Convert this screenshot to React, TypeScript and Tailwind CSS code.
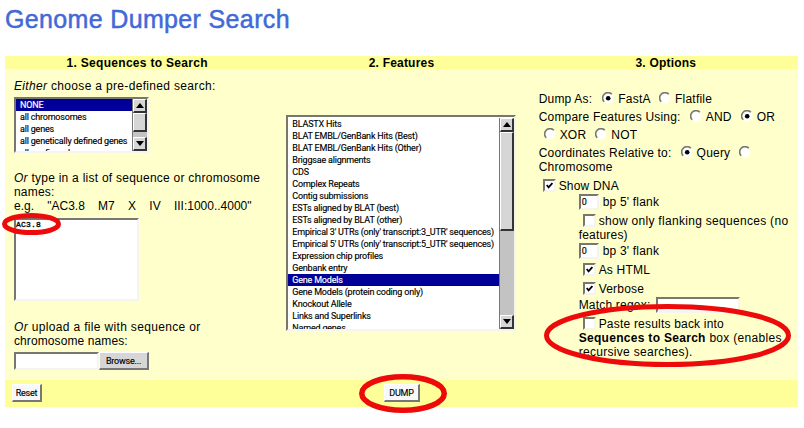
import type { ReactNode } from "react";

const searches = ["NONE", "all chromosomes", "all genes", "all genetically defined genes", "all confirmed genes"];

const features = [
  "BLASTX Hits",
  "BLAT EMBL/GenBank Hits (Best)",
  "BLAT EMBL/GenBank Hits (Other)",
  "Briggsae alignments",
  "CDS",
  "Complex Repeats",
  "Contig submissions",
  "ESTs aligned by BLAT (best)",
  "ESTs aligned by BLAT (other)",
  "Empirical 3' UTRs (only' transcript:3_UTR' sequences)",
  "Empirical 5' UTRs (only' transcript:5_UTR' sequences)",
  "Expression chip profiles",
  "Genbank entry",
  "Gene Models",
  "Gene Models (protein coding only)",
  "Knockout Allele",
  "Links and Superlinks",
  "Named genes",
];

const small = "font-['Roboto','Liberation_Sans',sans-serif] text-[9px] font-normal tracking-[-0.2px] [-webkit-text-stroke:0.15px_currentColor]";
const inset = "border-t-2 border-l-2 border-[#777770] border-r-2 border-b-2 border-r-[#f5f5ee] border-b-[#f5f5ee] bg-white";

function Arrow({ down = false }: { down?: boolean }) {
  return (
    <div className="flex h-[14px] w-[14px] shrink-0 items-center justify-center border border-t-white border-l-white border-r-2 border-b-2 border-r-[#333] border-b-[#333] bg-[#d6d6d6]">
      <svg width="8" height="5" viewBox="0 0 8 5">
        <path d={down ? "M0 0H8L4 5Z" : "M0 5H8L4 0Z"} fill="#000" />
      </svg>
    </div>
  );
}

function Scrollbar({ thumb }: { thumb: string }) {
  return (
    <div className="flex w-[15px] shrink-0 flex-col border-l border-[#777] bg-[#c3c3c3]">
      <Arrow />
      <div className={`${thumb} w-[14px] shrink-0 border border-t-white border-l-white border-r-2 border-b-2 border-r-[#333] border-b-[#333] bg-[#d6d6d6]`} />
      <div className="grow" />
      <Arrow down />
    </div>
  );
}

function Option({ label, selected }: { label: string; selected: boolean }) {
  return (
    <div className={`h-3 shrink-0 pl-[4px] leading-[12px] whitespace-pre ${selected ? "bg-[#000099] text-white" : "text-black"}`}>
      {label}
    </div>
  );
}

function Radio({ on = false }: { on?: boolean }) {
  return (
    <svg width="12" height="12" viewBox="0 0 12 12" className="mr-1 mb-[3px] shrink-0">
      <circle cx="6" cy="6" r="5.4" fill="#fff" />
      <path d="M9.8 2.2A5.2 5.2 0 1 0 2.2 9.8" fill="none" stroke="#777770" strokeWidth="1.6" />
      {on && <circle cx="6.2" cy="6.2" r="2.3" fill="#000" />}
    </svg>
  );
}

function Check({ on = false }: { on?: boolean }) {
  return (
    <div className={`mr-[3px] mb-[2px] flex h-[13px] w-[13px] shrink-0 items-center justify-center ${inset}`}>
      {on && (
        <svg width="7" height="7" viewBox="0 0 7 7">
          <path d="M0.7 3L2.6 5.3L6.4 1" fill="none" stroke="#000" strokeWidth="1.8" />
        </svg>
      )}
    </div>
  );
}

function Row({ children, className = "" }: { children: ReactNode; className?: string }) {
  return <div className={`flex h-[14px] items-center leading-[14px] whitespace-pre ${className}`}>{children}</div>;
}

function Ring({ className, rx, ry, w }: { className: string; rx: number; ry: number; w: number }) {
  return (
    <svg className={`absolute ${className}`} width={rx * 2} height={ry * 2}>
      <ellipse cx={rx} cy={ry} rx={rx - w / 2} ry={ry - w / 2} fill="none" stroke="#ed0a0a" strokeWidth={w} />
    </svg>
  );
}

export default function App() {
  return (
    <div className="relative h-[428px] w-[804px] overflow-hidden bg-white pl-[5px] font-['Liberation_Sans',sans-serif] text-[12px] tracking-[0.2px] text-black">
      <h1 className="h-14 pt-[4px] text-[25px] leading-[30px] tracking-[0.35px] whitespace-nowrap text-[#4169d8] [-webkit-text-stroke:0.5px_#4169d8]">Genome Dumper Search</h1>

      <div className="w-[793px]">
        <div className="grid h-[13px] grid-cols-3 bg-[#ffff99] text-center leading-[14px] font-bold">
          <div className="tracking-[0.3px]">1. Sequences to Search</div>
          <div>2. Features</div>
          <div>3. Options</div>
        </div>

        <div className="grid h-[311px] grid-cols-3 bg-[#ffffcc]">
          <div className="flex flex-col items-start pt-[10px] pl-[9px]">
            <Row className="tracking-[0.33px]"><i>Either</i> choose a pre-defined search:</Row>
            <div className={`mt-[4px] flex h-[56px] w-[135px] ${inset} ${small}`}>
              <div className="flex min-w-0 grow flex-col overflow-hidden">
                {searches.map((s, i) => <Option key={s} label={s} selected={i === 0} />)}
              </div>
              <Scrollbar thumb="h-[19px]" />
            </div>
            <Row className="mt-[18px] tracking-[0.25px]"><i>Or</i> type in a list of sequence or chromosome</Row>
            <Row>names:</Row>
            <Row className="tracking-[-0.01px]">{'e.g.    "AC3.8    M7    X    IV    III:1000..4000"'}</Row>
            <div className={`mt-[5px] h-[83px] w-[125px] font-['Liberation_Mono',monospace] text-[8px] leading-[10px] tracking-[0.2px] [-webkit-text-stroke:0.3px_#000] ${inset}`}>AC3.8</div>
            <Row className="mt-[19px] tracking-[0.34px]"><i>Or</i> upload a file with sequence or</Row>
            <Row className="tracking-[0.1px]">chromosome names:</Row>
            <div className="mt-[4px] flex">
              <div className={`h-[18px] w-[85px] ${inset}`} />
              <button className={`h-[18px] w-[50px] border border-t-white border-l-white border-r-2 border-b-2 border-r-[#777] border-b-[#777] bg-[#d6d6d6] leading-[14px] ${small}`}>Browse...</button>
            </div>
          </div>

          <div className="pt-[46px] pl-[17px]">
            <div className={`flex h-[216px] w-[230px] pt-[1px] ${inset} ${small}`}>
              <div className="flex min-w-0 grow flex-col overflow-hidden">
                {features.map((f) => <Option key={f} label={f} selected={f === "Gene Models"} />)}
              </div>
              <Scrollbar thumb="h-[99px]" />
            </div>
          </div>

          <div className="pt-[23px] pl-[5px]">
            <Row>Dump As:  <span className="w-[3px]" /><Radio on />FastA  <span className="w-[2px]" /><Radio />Flatfile</Row>
            <Row className="mt-[4px]">Compare Features Using:  <span className="w-[2px]" /><Radio />AND  <span className="w-[2px]" /><Radio on />OR</Row>
            <Row className="mt-[4px] pl-[5px]"><Radio />XOR  <span className="w-[2px]" /><Radio />NOT</Row>
            <Row className="mt-[4px]">Coordinates Relative to:  <span className="w-[2px]" /><Radio on />Query  <span className="w-[2px]" /><Radio /></Row>
            <Row>Chromosome</Row>
            <Row className="mt-[5px] pl-[4px]"><Check on />Show DNA</Row>
            <div className="pl-[40px]">
              <Row className="mt-[2px]"><div className={`mr-1 h-[16px] w-[20px] shrink-0 pl-px leading-[12px] ${inset} ${small}`}>0</div>bp 5' flank</Row>
              <Row className="mt-[5px] pl-[4px] tracking-[0.3px]"><Check />show only flanking sequences (no</Row>
              <Row>features)</Row>
              <Row className="mt-[2px]"><div className={`mr-1 h-[16px] w-[20px] shrink-0 pl-px leading-[12px] ${inset} ${small}`}>0</div>bp 3' flank</Row>
              <Row className="mt-[5px] pl-[4px]"><Check on />As HTML</Row>
              <Row className="mt-[5px] pl-[4px]"><Check on />Verbose</Row>
              <Row className="mt-[2px]">Match regex: <div className={`ml-[2px] h-[16px] w-[84px] shrink-0 ${inset}`} /></Row>
              <Row className="mt-[5px] pl-[4px]"><Check />Paste results back into</Row>
              <Row className="tracking-[0.3px]"><b>Sequences to Search</b> box (enables</Row>
              <Row className="tracking-[0.3px]">recursive searches).</Row>
            </div>
          </div>
        </div>

        <div className="grid h-[27px] grid-cols-3 bg-[#ffff99]">
          <div className="pt-[4px] pl-[7px]">
            <button className={`block h-[18px] w-[30px] border border-white border-r-2 border-b-2 border-r-[#777] border-b-[#777] bg-[#f8f8f8] leading-[14px] ${small}`}>Reset</button>
          </div>
          <div className="flex justify-center pt-[4px] pl-px">
            <button className={`block h-[18px] w-[36px] border border-white border-r-2 border-b-2 border-r-[#777] border-b-[#777] bg-[#f8f8f8] leading-[14px] ${small}`}>DUMP</button>
          </div>
          <div />
        </div>
      </div>

      <Ring className="left-[2px] top-[213px]" rx={29.5} ry={11} w={5} />
      <Ring className="left-[359px] top-[374px]" rx={44} ry={19.5} w={5.5} />
      <Ring className="left-[544px] top-[304px]" rx={123.5} ry={31.5} w={5} />
    </div>
  );
}
